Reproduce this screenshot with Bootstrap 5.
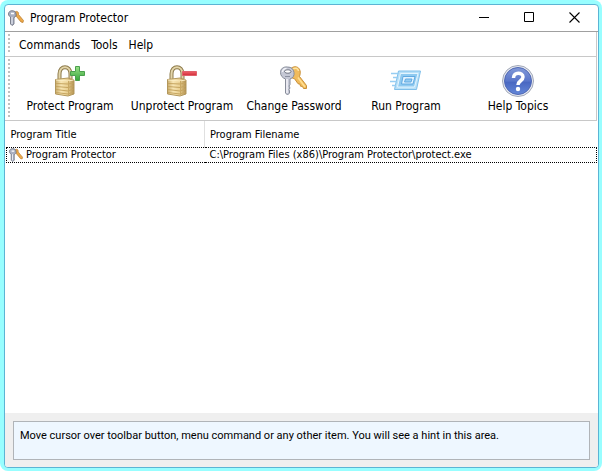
<!DOCTYPE html>
<html lang="en">
<head>
<meta charset="utf-8">
<meta name="viewport" content="width=device-width, initial-scale=1">
<title>Program Protector</title>
<link href="https://cdn.jsdelivr.net/npm/bootstrap@5.3.0/dist/css/bootstrap.min.css" rel="stylesheet">
<style>
body { font: 12px/16px "DejaVu Sans Condensed", "Open Sans", sans-serif; color: #000; background: #fff; }
.glow { background: #98feff; padding: 4px 3px 3px 4px; border-radius: 8px; }
.app-window { background: #fff; border: 1px solid #5cb4d4; border-radius: 4px; overflow: hidden; }
.title-bar { height: 27px; padding: 0 1px 1px 3px; border-bottom: 1px solid #a0a0a0; }
.title-bar h1 { font-size: 12px; line-height: 16px; font-weight: 400; padding-left: 6px; }
.win-btn { width: 45px; height: 24px; padding: 0; border: 0; background: transparent; }
.strip { border-bottom: 1px solid #c8c8c8; padding-left: 3px; margin-right: 1px; border-right: 1px solid #c8c8c8; }
.grip { width: 2px; align-self: stretch; margin: 2px 4px 2px 0; background: repeating-linear-gradient(#c0c0c0 0 2px, #fff 2px 4px); }
.menus { height: 25px; }
.menus .gap-1px { gap: 1px; }
.menus button { font-size: 12px; line-height: 16px; padding: 1px 5px 0; border: 0; background: transparent; color: #000; }
.tools { height: 64px; }
.tool { width: 112px; padding: 8px 0 0; border: 0; background: transparent; color: #000; font-size: 12px; line-height: 18px; white-space: nowrap; }
.table-area { margin: 0 1px; }
.programs { font-size: 11px; line-height: 14px; table-layout: fixed; }
.programs th { font-weight: 400; height: 26px; padding: 2px 5px 0; }
.programs th:first-child { width: 198px; padding-left: 4px; border-right: 1px solid #e0e0e0; }
.programs td { height: 15px; padding: 0 5px; border-top: 1px dotted #000; border-bottom: 1px dotted #000; white-space: nowrap; }
.programs td:first-child { padding-left: 1px; border-left: 1px dotted #000; }
.programs td:last-child { border-right: 1px dotted #000; }
.programs svg { margin-right: 2px; }
.hint-area { background: #efefef; padding: 8px 8px 7px; }
.hint { background: #eef7ff; border: 1px solid #b0b4b8; min-height: 39px; padding: 6px; font: 11px/16px Roboto, sans-serif; }
</style>
<script src="https://cdn.jsdelivr.net/npm/bootstrap@5.3.0/dist/js/bootstrap.bundle.min.js"></script>
</head>
<body>
<svg width="0" height="0" class="position-absolute" aria-hidden="true">
  <defs>
    <linearGradient id="brass"><stop offset="0" stop-color="#c9ac6c"/><stop offset=".3" stop-color="#f8e6b4"/><stop offset=".65" stop-color="#e9cf90"/><stop offset="1" stop-color="#b08f50"/></linearGradient>
    <linearGradient id="plusfill" x2="0" y2="1"><stop offset="0" stop-color="#9be088"/><stop offset="1" stop-color="#35a63a"/></linearGradient>
    <linearGradient id="minusfill" x2="0" y2="1"><stop offset="0" stop-color="#f0636b"/><stop offset="1" stop-color="#d02c38"/></linearGradient>
    <linearGradient id="ball" x2="0" y2="1"><stop offset="0" stop-color="#8299d8"/><stop offset=".5" stop-color="#5a76ca"/><stop offset=".55" stop-color="#4a68c2"/><stop offset="1" stop-color="#6387d8"/></linearGradient>
    <symbol id="lock" viewBox="0 0 32 32">
      <path d="M5.500 15V9C5.500 0 16.500 0 16.500 9v6" fill="none" stroke="#8d7a4a" stroke-width="4"/>
      <path d="M5.500 15V9C5.500 0 16.500 0 16.500 9v6" fill="none" stroke="#e3d5aa" stroke-width="2"/>
      <path d="M1.500 14.500 14 13l6 2v14l-6 2-12.500-2z" fill="url(#brass)" stroke="#b2975c"/>
      <path d="M2 18.500l12 .5 5.500-1M2 21.500l12 1 5.500-1.500M2 24.500l12 1.500 5.500-2M2 27.500l12 1.500 5.500-2" fill="none" stroke="#c6a560"/>
      <path d="m2 15 12 1 5.500-1" fill="none" stroke="#fbedc2"/>
      <path d="M14.500 16v14" stroke="#c9a964"/>
    </symbol>
    <symbol id="keys" viewBox="0 0 32 32">
      <path d="M13 3.500c3-3 8-2 9 2 .7 2.500 0 4-.5 6l7 9v3h-3l-1-2-2-.3-.5-2-2-.5-3.500-5-6-2z" fill="#f0bb5c" stroke="#c99039"/>
      <path d="M20 12.500 27 22" stroke="#ffdf91" stroke-width="1.500"/>
      <path d="M15 4c2-1.500 5-1 5.500 2" fill="none" stroke="#ffe4a0" stroke-width="1.500"/>
      <path d="M9.500 2C5 1.500 2.500 4 2.500 7.500c0 3 2 5.500 5 6.500v14l2 2 2-2v-2l-.5-1.500 1-1.500-1-2 1-1.500V14c3-1 4.500-3.500 4-6.500C15.500 4 13.500 2 9.500 2z" fill="#c5c8d5" stroke="#878c99"/>
      <path d="M9 14v14M4.500 7c0-2 2-3.500 4-3.500" fill="none" stroke="#f4f5fa" stroke-width="1.500"/>
      <path d="M6.500 6.500c0-2 6-2.500 6.500 0 .3 2-6 2.500-6.500 0z" fill="#fff" stroke="#666b78"/>
      <path d="M7 11.500h5" stroke="#8b90a0"/>
    </symbol>
    <symbol id="keys-small" viewBox="0 0 16 16">
      <path d="M7 2c2-1.500 4 0 3.500 2.500l5 6-.5 2-2-.5-5-6z" fill="#eba94b" stroke="#b9782a" stroke-width=".7"/>
      <path d="M4 .7C2 .7.500 2 .5 4c0 1.500 1 2.500 2 3v7l1.500 1.500L6 14V7.500c1.500-.5 2.500-2 2-3.500C8 2 6.500.7 4 .7z" fill="#aab0c2" stroke="#656b79" stroke-width=".8"/>
      <path d="M4 7v7" stroke="#eef0f6"/>
      <path d="M3 3.500h3" stroke="#fff" stroke-width="1.500"/>
    </symbol>
  </defs>
</svg>
<div class="glow vh-100 d-flex">
<main class="app-window d-flex flex-column flex-grow-1">
  <header class="title-bar d-flex align-items-center flex-shrink-0">
    <svg width="16" height="16" aria-hidden="true"><use href="#keys-small"/></svg>
    <h1 class="m-0 flex-grow-1">Program Protector</h1>
    <button class="win-btn" type="button" aria-label="Minimize"><svg width="11" height="11" class="d-block m-auto"><path d="M0 5.500h10" stroke="#000"/></svg></button>
    <button class="win-btn" type="button" aria-label="Maximize"><svg width="11" height="11" class="d-block m-auto"><path d="M.5.5h9v9h-9z" fill="none" stroke="#000"/></svg></button>
    <button class="win-btn" type="button" aria-label="Close"><svg width="11" height="11" class="d-block m-auto"><path d="m.5.500 10 10m0-10-10 10" stroke="#000" stroke-width="1.100"/></svg></button>
  </header>
  <nav class="strip menus d-flex align-items-center flex-shrink-0" aria-label="Main menu">
    <span class="grip"></span>
    <div class="d-flex gap-1px">
      <button type="button">Commands</button>
      <button type="button">Tools</button>
      <button type="button">Help</button>
    </div>
  </nav>
  <div class="strip tools d-flex align-items-start flex-shrink-0" role="toolbar" aria-label="Program actions">
    <span class="grip"></span>
    <button class="tool" type="button"><svg width="32" height="32" class="d-block mx-auto" aria-hidden="true"><use href="#lock"/><path d="M21.500 1.500h4v5h5v4h-5v5h-4v-5h-5v-4h5z" fill="url(#plusfill)" stroke="#4aa04c"/></svg>Protect Program</button>
    <button class="tool" type="button"><svg width="32" height="32" class="d-block mx-auto" aria-hidden="true"><use href="#lock"/><path d="M16.500 6.500h14v4h-14z" fill="url(#minusfill)" stroke="#e0606a"/></svg>Unprotect Program</button>
    <button class="tool" type="button"><svg width="32" height="32" class="d-block mx-auto" aria-hidden="true"><use href="#keys"/></svg>Change Password</button>
    <button class="tool" type="button"><svg width="32" height="32" class="d-block mx-auto" aria-hidden="true">
      <path d="M8.500 6h22l-4 18.500H4.500z" fill="#b8e0f8" stroke="#7fbfea"/>
      <path d="M10.500 8.500h17.500l-3.500 13.500H7.500z" fill="#8fcaf0" stroke="#e4f5ff"/>
      <path d="M13 11.500h12l-2 7.500H11.500z" fill="#e2f3ff" stroke="#62aae2"/>
      <path d="M15.500 14H22l-1 3h-6.500z" fill="#94ccf2" stroke="#62aae2"/>
      <path d="M1 8.500h7M3 12.500h5M0 16.500h7M2 20.500h4" stroke="#96cdf2" stroke-width="1.500"/>
    </svg>Run Program</button>
    <button class="tool" type="button"><svg width="32" height="32" class="d-block mx-auto" aria-hidden="true">
      <circle cx="16" cy="16" r="15.500" fill="#e6e9f0" stroke="#a2a8b8"/>
      <circle cx="16" cy="16" r="13.500" fill="url(#ball)" stroke="#5068b4"/>
      <path d="M11.500 13c0-6.500 9.500-6 9.500-1 0 4-5 3.500-5 8" fill="none" stroke="#fff" stroke-width="3.500"/>
      <circle cx="16" cy="24" r="2.200" fill="#fff"/>
    </svg>Help Topics</button>
  </div>
  <div class="table-area flex-grow-1 overflow-auto">
    <table class="programs w-100">
      <thead><tr><th scope="col">Program Title</th><th scope="col">Program Filename</th></tr></thead>
      <tbody><tr>
        <td><div class="d-flex align-items-center"><svg width="16" height="14" viewBox="0 0 16 14" aria-hidden="true"><use href="#keys-small" width="16" height="14"/></svg>Program Protector</div></td>
        <td>C:\Program Files (x86)\Program Protector\protect.exe</td>
      </tr></tbody>
    </table>
  </div>
  <footer class="hint-area flex-shrink-0">
    <div class="hint" role="status">Move cursor over toolbar button, menu command or any other item. You will see a hint in this area.</div>
  </footer>
</main>
</div>
</body>
</html>
